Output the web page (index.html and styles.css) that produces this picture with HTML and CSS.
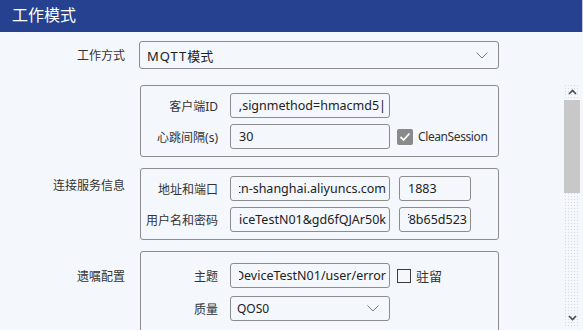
FILE: index.html
```html
<!DOCTYPE html>
<html lang="zh-CN">
<head>
    <meta charset="UTF-8">
    <title>工作模式</title>
    <link rel="stylesheet" href="styles.css">
</head>
<body>
    <div class="titlebar">工作模式</div>

    <div class="mode-row">
        <label class="row-label">工作方式</label>
        <div class="select select-wide">
            <span><span class="mqtt">MQTT</span>模式</span>
            <svg class="chevron" width="12" height="7" viewBox="0 0 12 7"><path d="M0.5 0.5 L6 6 L11.5 0.5" fill="none" stroke="#7a7a7a" stroke-width="1"/></svg>
        </div>
    </div>

    <div class="scroll-area">
        <div class="groups">
            <div class="group-row">
                <div class="group-label"></div>
                <div class="group-box">
                    <div class="field-row">
                        <span class="field-label">客户端ID</span>
                        <div class="input"><div class="clip"><span>e=3,signmethod=hmacmd5|</span></div></div>
                    </div>
                    <div class="field-row">
                        <span class="field-label">心跳间隔(s)</span>
                        <div class="input"><span>30</span></div>
                        <span class="check">
                            <svg width="12" height="10" viewBox="0 0 12 10"><path d="M1.5 5 L4.5 8 L10.5 1.5" fill="none" stroke="#fff" stroke-width="1.8"/></svg>
                        </span>
                        <span class="check-label">CleanSession</span>
                    </div>
                </div>
            </div>

            <div class="group-row">
                <div class="group-label">连接服务信息</div>
                <div class="group-box">
                    <div class="field-row">
                        <span class="field-label">地址和端口</span>
                        <div class="input"><div class="clip"><span>t.cn-shanghai.aliyuncs.com</span></div></div>
                        <div class="input input-short"><span>1883</span></div>
                    </div>
                    <div class="field-row">
                        <span class="field-label">用户名和密码</span>
                        <div class="input"><div class="clip"><span>iceTestN01&amp;gd6fQJAr50k</span></div></div>
                        <div class="input input-short"><div class="clip"><span>f8b65d523</span></div></div>
                    </div>
                </div>
            </div>

            <div class="group-row will">
                <div class="group-label">遗嘱配置</div>
                <div class="group-box">
                    <div class="field-row">
                        <span class="field-label">主题</span>
                        <div class="input"><div class="clip"><span>/DeviceTestN01/user/error</span></div></div>
                        <span class="box-empty"></span>
                        <span class="check-label cn">驻留</span>
                    </div>
                    <div class="field-row">
                        <span class="field-label">质量</span>
                        <div class="select select-small">
                            <span>QOS0</span>
                            <svg class="chevron" width="12" height="7" viewBox="0 0 12 7"><path d="M0.5 0.5 L6 6 L11.5 0.5" fill="none" stroke="#7a7a7a" stroke-width="1"/></svg>
                        </div>
                    </div>
                </div>
            </div>
        </div>

        <div class="scrollbar">
            <div class="sb-arrow">
                <svg width="9" height="6" viewBox="0 0 9 6"><path d="M1 5 L4.5 1.5 L8 5" fill="none" stroke="#4a4a4a" stroke-width="1.6"/></svg>
            </div>
            <div class="sb-thumb"></div>
            <div class="sb-track"></div>
            <div class="sb-arrow">
                <svg width="9" height="6" viewBox="0 0 9 6"><path d="M1 1 L4.5 4.5 L8 1" fill="none" stroke="#4a4a4a" stroke-width="1.6"/></svg>
            </div>
        </div>
    </div>
</body>
</html>
```

FILE: styles.css
```css
body {
    margin: 0;
    width: 583px;
    height: 330px;
    overflow: hidden;
    background-color: #f4f7fc;
    font-family: "Noto Sans", "Noto Sans CJK SC", sans-serif;
    font-size: 12px;
    color: #333;
}
.titlebar {
    height: 32px;
    line-height: 31px;
    padding-left: 12px;
    background-color: #26418f;
    color: #fff;
    font-size: 16px;
    border-right: 1px solid #b9c3dc;
}
.mode-row {
    display: flex;
    align-items: center;
    margin-top: 9px;
    height: 28px;
}
.row-label {
    width: 125px;
    margin-right: 14px;
    text-align: right;
}
.select {
    display: flex;
    align-items: center;
    justify-content: space-between;
    box-sizing: border-box;
    border: 1px solid #8c8c8c;
    border-radius: 3px;
    color: #222;
    font-size: 12px;
}
.select-wide {
    width: 360px;
    height: 28px;
    padding: 0 10px 0 7px;
    font-size: 13px;
}
.mqtt {
    letter-spacing: 1px;
}
.select-small {
    width: 160px;
    height: 25px;
    padding: 0 10px 0 6px;
}
.scroll-area {
    display: flex;
    margin-top: 15px;
    height: 246px;
    overflow: hidden;
}
.groups {
    width: 500px;
    padding-top: 1px;
    display: flex;
    flex-direction: column;
    gap: 11px;
}
.group-row {
    display: flex;
    align-items: flex-start;
}
.group-label {
    width: 125px;
    margin-right: 15px;
    padding-top: 9px;
    line-height: 18px;
    text-align: right;
}
.will .group-label {
    padding-top: 17px;
}
.group-box {
    width: 359px;
    box-sizing: border-box;
    border: 1px solid #8c8c8c;
    border-radius: 3px;
    padding: 7px 0;
    display: flex;
    flex-direction: column;
    gap: 6px;
}
.will .group-box {
    padding-top: 11px;
    gap: 8px;
    height: 100px;
}
.field-row {
    display: flex;
    align-items: center;
}
.field-label {
    width: 77px;
    margin-right: 12px;
    text-align: right;
}
.input {
    width: 160px;
    height: 25px;
    box-sizing: border-box;
    border: 1px solid #8c8c8c;
    border-radius: 3px;
    padding: 0 3px 0 8px;
    display: flex;
    align-items: center;
    overflow: hidden;
    color: #222;
    font-size: 12.5px;
    white-space: nowrap;
}
.input-short {
    width: 72px;
    margin-left: 9px;
}
.clip {
    width: 100%;
    display: flex;
    justify-content: flex-end;
    overflow: hidden;
}
.check {
    width: 16px;
    height: 16px;
    margin-left: 7px;
    border-radius: 2px;
    background-color: #8a8a8a;
    display: flex;
    align-items: center;
    justify-content: center;
}
.check-label {
    margin-left: 5px;
    color: #333;
    letter-spacing: -0.4px;
}
.check-label.cn {
    font-size: 13px;
    letter-spacing: 0;
}
.box-empty {
    width: 14px;
    height: 14px;
    margin-left: 7px;
    box-sizing: border-box;
    border: 1px solid #3c3c3c;
}
.scrollbar {
    width: 16px;
    margin-left: 64px;
    margin-bottom: 4px;
    display: flex;
    flex-direction: column;
    background-color: #f4f7fc;
    background-image: radial-gradient(#d6d9de 0.7px, transparent 1px);
    background-size: 3px 3px;
}
.sb-arrow {
    height: 16px;
    display: flex;
    align-items: center;
    justify-content: center;
}
.sb-thumb {
    height: 93px;
    background-color: #c8c8c8;
}
.sb-track {
    flex: 1;
}
```
